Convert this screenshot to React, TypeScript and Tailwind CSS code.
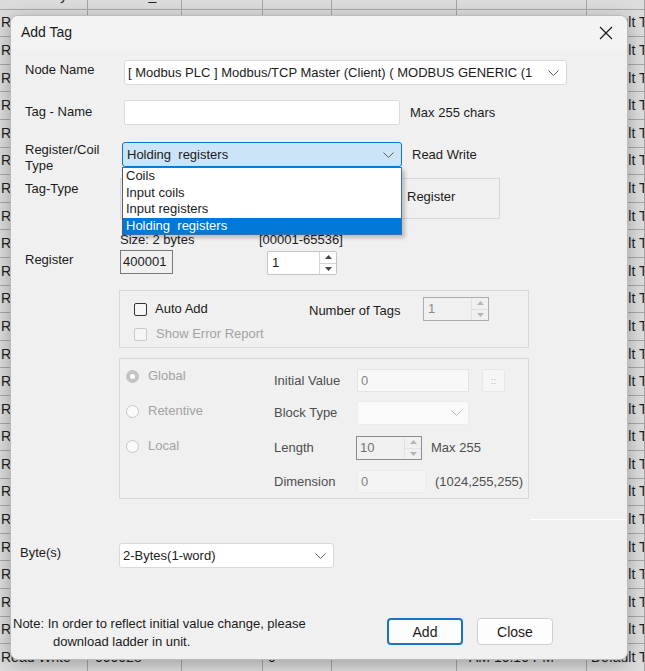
import React from "react";

const COLW = ["w-[88px]", "w-[94px]", "w-[81px]", "w-[69px]", "w-[125px]", "w-[130px]", "w-[58px]"];
const COLPAD = ["pl-[1px]", "pl-[7px]", "pl-[6px]", "pl-[5px]", "pl-[6px]", "pl-[12px]", "pl-[4px]"];

const rows: string[][] = [];
rows.push(["Read Only", "0110000_00", "", "0", "", "AM 10:10:17 AM", "Default Tag"]);
for (let i = 0; i < 23; i++) {
  rows.push(["Read Write", "", "", "", "", "", "Default Tag"]);
}
rows.push(["Read Write", "000028", "", "0", "", "AM 10:10 PM", "Default Tag"]);

function Chevron({ c = "#5f5f5f" }: { c?: string }) {
  return (
    <svg width="11" height="6" viewBox="0 0 11 6">
      <path d="M0.5 0.5 L5.5 5.5 L10.5 0.5" fill="none" stroke={c} strokeWidth="1" />
    </svg>
  );
}

function SpinArrows({ c, line }: { c: string; line: string }) {
  return (
    <div className={`flex h-full w-[17px] flex-col border-l ${line}`}>
      <div className={`flex flex-1 items-center justify-center border-b ${line}`}>
        <svg width="7" height="4" viewBox="0 0 7 4">
          <path d="M0 4 L3.5 0 L7 4Z" fill={c} />
        </svg>
      </div>
      <div className="flex flex-1 items-center justify-center">
        <svg width="7" height="4" viewBox="0 0 7 4">
          <path d="M0 0 L3.5 4 L7 0Z" fill={c} />
        </svg>
      </div>
    </div>
  );
}

function Table() {
  return (
    <div className="flex flex-col mt-[-18px]">
      {rows.map((r, i) => (
        <div key={i} className="flex h-[27.6px] shrink-0 border-b border-[#a6a6a6]">
          {r.map((t, j) => (
            <div
              key={j}
              className={`${COLW[j]} ${COLPAD[j]} flex items-center overflow-hidden whitespace-nowrap border-r border-[#a6a6a6] text-[14px] text-[#202020]`}
            >
              {t}
            </div>
          ))}
        </div>
      ))}
    </div>
  );
}

function Dialog() {
  return (
    <div className="absolute left-[10px] top-[15px] flex h-[645px] w-[618px] flex-col overflow-hidden rounded-[8px] border border-[#bcbcbc] bg-[#f0f0f0] shadow-[0_4px_18px_rgba(0,0,0,0.28)]">
      {/* title bar */}
      <div className="flex h-[33px] shrink-0 items-center justify-between bg-[#f3f3f3] pl-[10px] pr-[14px]">
        <span className="text-[14px] text-[#1a1a1a]">Add Tag</span>
        <svg width="14" height="14" viewBox="0 0 14 14">
          <path d="M1 1 L13 13 M13 1 L1 13" stroke="#1a1a1a" strokeWidth="1.2" fill="none" />
        </svg>
      </div>

      <div className="flex flex-col pl-[14px] text-[13px] leading-[16px] text-[#1b1b1b]">
        {/* Node name */}
        <div className="mt-[11px] flex h-[25px]">
          <div className="w-[99px] pt-[2px]">Node Name</div>
          <div className="flex h-full w-[443px] items-center justify-between rounded-[3px] border border-[#d9d9d9] bg-white pl-[3px] pr-[7px] whitespace-nowrap">
            <span>[ Modbus PLC ] Modbus/TCP Master (Client) ( MODBUS GENERIC (1</span>
            <Chevron />
          </div>
        </div>

        {/* Tag name */}
        <div className="mt-[15px] flex h-[25px]">
          <div className="w-[99px] pt-[4px]">Tag - Name</div>
          <div className="h-full w-[276px] rounded-[2px] border border-[#dadada] bg-white" />
          <div className="ml-[10px] pt-[5px]">Max 255 chars</div>
        </div>

        {/* Register/Coil type */}
        <div className="relative z-10 mt-[17px] flex h-[25px]">
          <div className="w-[97px]">
            Register/Coil
            <br />
            Type
          </div>
          <div className="relative h-full w-[280px]">
            <div className="flex h-full items-center justify-between rounded-[3px] border border-[#0078d7] bg-[#cce4f7] pl-[4px] pr-[7px]">
              <span className="whitespace-pre">Holding  registers</span>
              <Chevron />
            </div>
            <div className="absolute left-0 top-[25px] flex w-[280px] flex-col border border-[#3b6fae] border-l-[#5a5a5a] bg-white shadow-[3px_3px_4px_rgba(0,0,0,0.22)]">
              <div className="h-[16.5px] pl-[3px] leading-[16.5px]">Coils</div>
              <div className="h-[16.5px] pl-[3px] leading-[16.5px]">Input coils</div>
              <div className="h-[16.5px] pl-[3px] leading-[16.5px]">Input registers</div>
              <div className="h-[16.5px] whitespace-pre bg-[#0078d7] pl-[3px] leading-[16.5px] text-white">Holding  registers</div>
            </div>
          </div>
          <div className="ml-[10px] pt-[5px]">Read Write</div>
        </div>

        {/* Tag type */}
        <div className="mt-[11px] flex h-[41px]">
          <div className="w-[95px] pt-[3px]">Tag-Type</div>
          <div className="h-full w-[380px] border border-[#d6d6d6] pl-[286px] pt-[10px]">Register</div>
        </div>

        {/* Size */}
        <div className="mt-[13px] flex h-[16px] pl-[95px]">
          <div className="w-[139px]">Size: 2 bytes</div>
          <div>[00001-65536]</div>
        </div>

        {/* Register */}
        <div className="mt-[2px] flex items-start">
          <div className="w-[95px] pt-[2px]">Register</div>
          <div className="h-[24px] w-[53px] border border-[#7a7a7a] bg-[#f0f0f0] pl-[2px] pt-[3px]">400001</div>
          <div className="ml-[94px] mt-[1px] flex h-[24px] w-[70px] overflow-hidden rounded-[2px] border border-[#c4c4c4] bg-white">
            <div className="flex-1 pl-[4px] pt-[3px]">1</div>
            <SpinArrows c="#444444" line="border-[#d4d4d4]" />
          </div>
        </div>

        {/* group 1 */}
        <div className="ml-[94px] mt-[15px] flex h-[58px] w-[410px] flex-col border border-[#d8d8d8] pl-[14px] pt-[6px]">
          <div className="flex h-[24px] items-center">
            <div className="flex w-[175px] items-center">
              <div className="h-[13px] w-[13px] rounded-[2px] border border-[#333333] bg-[#f7f7f7]" />
              <span className="ml-[8px]">Auto Add</span>
            </div>
            <div className="w-[114px] pt-[3px]">Number of Tags</div>
            <div className="flex h-[24px] w-[66px] overflow-hidden border border-[#adadad] bg-[#f0f0f0]">
              <div className="flex-1 pl-[4px] pt-[3px] text-[#8a8a8a]">1</div>
              <SpinArrows c="#b5b5b5" line="border-[#e2e2e2]" />
            </div>
          </div>
          <div className="mt-[5px] flex h-[16px] items-center">
            <div className="h-[13px] w-[13px] rounded-[2px] border border-[#c9c9c9] bg-[#f5f5f5]" />
            <span className="ml-[9px] text-[#a3a3a3]">Show Error Report</span>
          </div>
        </div>

        {/* group 2 */}
        <div className="ml-[94px] mt-[10px] flex h-[141px] w-[410px] border border-[#d8d8d8]">
          <div className="flex w-[154px] flex-col pl-[6px] pt-[9px] text-[#a3a3a3]">
            <div className="flex h-[16px] items-center">
              <div className="flex h-[13px] w-[13px] items-center justify-center rounded-full bg-[#c3c3c3]">
                <div className="h-[5px] w-[5px] rounded-full bg-white" />
              </div>
              <span className="ml-[9px]">Global</span>
            </div>
            <div className="mt-[19px] flex h-[16px] items-center">
              <div className="h-[13px] w-[13px] rounded-full border border-[#c6c6c6] bg-[#fafafa]" />
              <span className="ml-[9px]">Retentive</span>
            </div>
            <div className="mt-[19px] flex h-[16px] items-center">
              <div className="h-[13px] w-[13px] rounded-full border border-[#c6c6c6] bg-[#fafafa]" />
              <span className="ml-[9px]">Local</span>
            </div>
          </div>
          <div className="flex flex-col pt-[10px] text-[#4e4e4e]">
            <div className="flex h-[23px] items-center">
              <div className="w-[83px]">Initial Value</div>
              <div className="h-full w-[112px] border border-[#e4e4e4] bg-[#f8f8f8] pl-[3px] pt-[3px] text-[#858585]">0</div>
              <div className="ml-[13px] flex h-[23px] w-[23px] items-center justify-center rounded-[3px] border border-[#e6e6e6] bg-[#f6f6f6] text-[9px] text-[#b0b0b0]">::</div>
            </div>
            <div className="mt-[9px] flex h-[24px] items-center">
              <div className="w-[83px]">Block Type</div>
              <div className="flex h-full w-[112px] items-center justify-end rounded-[2px] border border-[#ececec] bg-[#fafafa] pr-[6px]">
                <Chevron c="#b8b8b8" />
              </div>
            </div>
            <div className="mt-[11px] flex h-[24px] items-center">
              <div className="w-[82px]">Length</div>
              <div className="flex h-full w-[66px] overflow-hidden border border-[#8c8c8c] bg-[#f0f0f0]">
                <div className="flex-1 pl-[3px] pt-[3px] text-[#707070]">10</div>
                <SpinArrows c="#b5b5b5" line="border-[#e2e2e2]" />
              </div>
              <div className="ml-[9px]">Max 255</div>
            </div>
            <div className="mt-[10px] flex h-[23px] items-center">
              <div className="w-[83px]">Dimension</div>
              <div className="h-full w-[69px] border border-[#ececec] bg-[#f4f4f4] pl-[3px] pt-[3px] text-[#858585]">0</div>
              <div className="ml-[9px]">(1024,255,255)</div>
            </div>
          </div>
        </div>

        {/* white line */}
        <div className="ml-[505px] mt-[20px] h-[1px] w-[120px] bg-white" />

        {/* Bytes */}
        <div className="ml-[-5px] mt-[23px] flex h-[25px]">
          <div className="w-[99px] pt-[2px]">Byte(s)</div>
          <div className="flex h-full w-[215px] items-center justify-between rounded-[3px] border border-[#d9d9d9] bg-white pl-[3px] pr-[7px]">
            <span>2-Bytes(1-word)</span>
            <Chevron />
          </div>
        </div>

        {/* bottom */}
        <div className="ml-[-12px] mt-[47px] flex">
          <div className="w-[374px] leading-[18px]">
            <div>Note: In order to reflect initial value change, please</div>
            <div className="pl-[40px]">download ladder in unit.</div>
          </div>
          <div className="mt-[3px] flex h-[27px] w-[76px] items-center justify-center rounded-[4px] border-2 border-[#1a73c8] bg-[#fdfdfd] text-[14px]">
            Add
          </div>
          <div className="ml-[14px] mt-[3px] flex h-[27px] w-[76px] items-center justify-center rounded-[4px] border border-[#cfcfcf] bg-[#fdfdfd] text-[14px]">
            Close
          </div>
        </div>
      </div>
    </div>
  );
}

export default function App() {
  return (
    <div className="relative h-[671px] w-[645px] overflow-hidden bg-[#dcdcdc] font-['Liberation_Sans',Arial,sans-serif] text-[#1a1a1a]">
      <Table />
      <Dialog />
    </div>
  );
}
